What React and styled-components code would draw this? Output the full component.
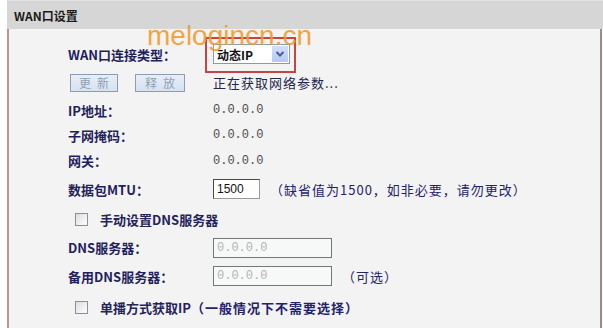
import React from 'react';
import styled, { createGlobalStyle } from 'styled-components';

const GlobalStyle = createGlobalStyle`
  html, body {
    margin: 0;
    padding: 0;
    background: #ffffff;
  }
  body {
    width: 603px;
    height: 328px;
    overflow: hidden;
    font-family: "Noto Sans CJK SC", "DejaVu Sans", sans-serif;
  }
`;

const Page = styled.div`
  height: 328px;
  padding-left: 7px;
  position: relative;
`;

const Header = styled.div`
  height: 29px;
  background: #d6d6d6;
  display: flex;
  align-items: center;
  padding-left: 7px;
  font-size: 12px;
  font-weight: bold;
  color: #1b1b1b;
  border-top: 1px solid #e2e2e2;
  box-sizing: border-box;
`;

const Body = styled.div`
  height: 299px;
  box-sizing: border-box;
  margin-right: 1px;
  background: #f4f3f3;
  border-left: 2px solid #b89494;
  border-right: 2px solid #a88484;
  padding: 11px 0 0 59px;
`;

const Row = styled.div`
  display: flex;
  align-items: center;
  height: ${(p) => p.$h}px;
`;

const Label = styled.div`
  width: 145px;
  flex: none;
  font-size: 13px;
  font-weight: bold;
  color: #1f1f5e;
  white-space: nowrap;
`;

const Value = styled.div`
  font-family: "Liberation Mono", monospace;
  font-size: 12px;
  color: #4c4c4c;
  white-space: nowrap;
`;

const Status = styled.div`
  font-size: 13px;
  color: #25254f;
  letter-spacing: 1px;
  white-space: nowrap;
`;

const Hint = styled.div`
  font-size: 13px;
  color: #22226e;
  letter-spacing: 1px;
  white-space: nowrap;
  margin-left: ${(p) => p.$ml ?? 10}px;
`;

const ButtonGroup = styled.div`
  width: 145px;
  flex: none;
  display: flex;
  gap: 17px;
  padding-left: 2px;
  box-sizing: border-box;
`;

const Button = styled.button`
  width: ${(p) => p.$w}px;
  height: 18px;
  padding: 0;
  border: 1px solid #8c9cb2;
  background: linear-gradient(#e6eef8, #d6e2f0);
  color: #8fa0b4;
  font-family: "Noto Sans CJK SC", sans-serif;
  font-size: 12px;
  letter-spacing: 6px;
  text-indent: 6px;
  line-height: 16px;
`;

const SelectWrap = styled.div`
  position: relative;
  display: flex;
  &::after {
    content: '';
    position: absolute;
    left: -8px;
    top: -7px;
    right: -6px;
    bottom: -9px;
    border: 2px solid #c54545;
  }
`;

const Select = styled.div`
  width: 77px;
  height: 20px;
  box-sizing: border-box;
  border: 1px solid #7f9db9;
  background: #ffffff;
  display: flex;
  align-items: center;
  justify-content: space-between;
  padding-left: 3px;
  font-size: 12px;
  font-weight: bold;
  color: #111;
`;

const Arrow = styled.div`
  width: 16px;
  height: 16px;
  margin-right: 1px;
  background: linear-gradient(#d2defb, #b6c9f4);
  display: flex;
  align-items: center;
  justify-content: center;
`;

const Input = styled.div`
  width: ${(p) => p.$w}px;
  height: 20px;
  box-sizing: border-box;
  border: 1px solid ${(p) => (p.$disabled ? '#6f7a78' : '#4a4a4a')};
  border-right-color: ${(p) => (p.$disabled ? '#6f7a78' : '#9a9a9a')};
  border-bottom-color: ${(p) => (p.$disabled ? '#6f7a78' : '#9a9a9a')};
  background: ${(p) => (p.$disabled ? '#f7f8f8' : '#ffffff')};
  display: flex;
  align-items: center;
  padding-left: 3px;
  font-family: ${(p) => (p.$disabled ? '"Liberation Mono", monospace' : '"Liberation Sans", sans-serif')};
  font-size: 12px;
  color: ${(p) => (p.$disabled ? '#b4b4b4' : '#111')};
`;

const Check = styled.span`
  width: 13px;
  height: 13px;
  box-sizing: border-box;
  border: 1px solid #8b8f9c;
  background: linear-gradient(135deg, #dcdcdc, #ffffff);
  margin: 0 12px 0 7px;
  flex: none;
`;

const CheckText = styled.div`
  font-size: 13px;
  font-weight: bold;
  color: #24245c;
  white-space: nowrap;
`;

const Watermark = styled.div`
  position: absolute;
  left: 147px;
  top: 20px;
  font-family: "Liberation Sans", sans-serif;
  font-size: 28px;
  color: #f29a2e;
  opacity: 0.88;
  pointer-events: none;
`;

const Chevron = () => (
  <svg width="10" height="8" viewBox="0 0 10 8">
    <path d="M1.5 2 L5 5.5 L8.5 2" fill="none" stroke="#4a5f8a" strokeWidth="2" />
  </svg>
);

export default function App() {
  return (
    <>
      <GlobalStyle />
      <Page>
        <Header>WAN口设置</Header>
        <Body>
          <Row $h={28}>
            <Label>WAN口连接类型：</Label>
            <SelectWrap>
              <Select>
                动态IP
                <Arrow>
                  <Chevron />
                </Arrow>
              </Select>
            </SelectWrap>
          </Row>
          <Row $h={29}>
            <ButtonGroup>
              <Button $w={48}>更新</Button>
              <Button $w={50}>释放</Button>
            </ButtonGroup>
            <Status>正在获取网络参数...</Status>
          </Row>
          <Row $h={26}>
            <Label>IP地址：</Label>
            <Value>0.0.0.0</Value>
          </Row>
          <Row $h={24}>
            <Label>子网掩码：</Label>
            <Value>0.0.0.0</Value>
          </Row>
          <Row $h={27}>
            <Label>网关：</Label>
            <Value>0.0.0.0</Value>
          </Row>
          <Row $h={30}>
            <Label>数据包MTU：</Label>
            <Input $w={47}>1500</Input>
            <Hint>（缺省值为1500，如非必要，请勿更改）</Hint>
          </Row>
          <Row $h={30}>
            <Check />
            <CheckText>手动设置DNS服务器</CheckText>
          </Row>
          <Row $h={27}>
            <Label>DNS服务器：</Label>
            <Input $w={119} $disabled>0.0.0.0</Input>
          </Row>
          <Row $h={30}>
            <Label>备用DNS服务器：</Label>
            <Input $w={119} $disabled>0.0.0.0</Input>
            <Hint>（可选）</Hint>
          </Row>
          <Row $h={32}>
            <Check />
            <CheckText>
              单播方式获取IP<Hint as="span" $ml={0}>（一般情况下不需要选择）</Hint>
            </CheckText>
          </Row>
        </Body>
        <Watermark>melogincn.cn</Watermark>
      </Page>
    </>
  );
}
